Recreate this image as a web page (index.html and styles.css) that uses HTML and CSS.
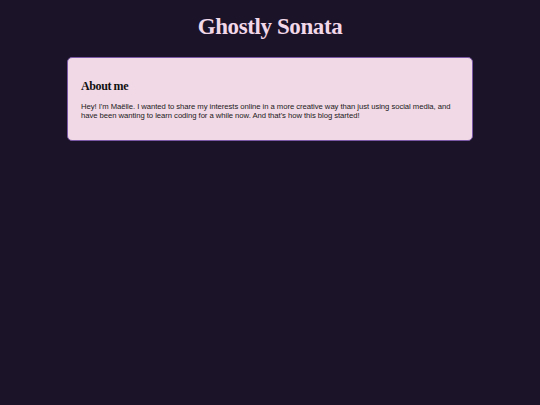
FILE: index.html
```html
<!DOCTYPE html>
<html lang="en">
<head>
<meta charset="utf-8">
<title>Ghostly Sonata</title>
<link rel="stylesheet" href="styles.css">
</head>
<body>
<header class="site-header">
  <h1 class="site-title">Ghostly Sonata</h1>
</header>
<main class="content">
  <section class="card">
    <h2 class="card-title">About me</h2>
    <p class="card-text">Hey! I'm Maëlle. I wanted to share my interests online in a more creative way than just using social media, and have been wanting to learn coding for a while now. And that's how this blog started!</p>
  </section>
</main>
</body>
</html>
```

FILE: styles.css
```css
html, body {
  margin: 0;
  padding: 0;
}
body {
  background: #1b1429;
  min-height: 405px;
  font-family: "Liberation Serif", "Times New Roman", serif;
}
.site-header {
  padding-top: 13px;
  text-align: center;
}
.site-title {
  margin: 0;
  font-size: 23px;
  line-height: 28px;
  letter-spacing: -0.4px;
  font-weight: bold;
  color: #f2d8e8;
}
.content {
  display: flex;
  justify-content: center;
  padding-top: 16px;
}
.card {
  box-sizing: border-box;
  width: 406px;
  background: #f2d9e6;
  border: 1.5px solid #7a58a6;
  border-radius: 5px;
  padding: 20px 13px 20px;
}
.card-title {
  margin: 0 0 8px;
  font-size: 12px;
  line-height: 16px;
  letter-spacing: -0.4px;
  font-weight: bold;
  color: #111;
}
.card-text {
  margin: 0;
  font-family: "Liberation Sans", Arial, sans-serif;
  font-size: 7.7px;
  line-height: 9px;
  letter-spacing: -0.05px;
  color: #1a1a1a;
}
```
